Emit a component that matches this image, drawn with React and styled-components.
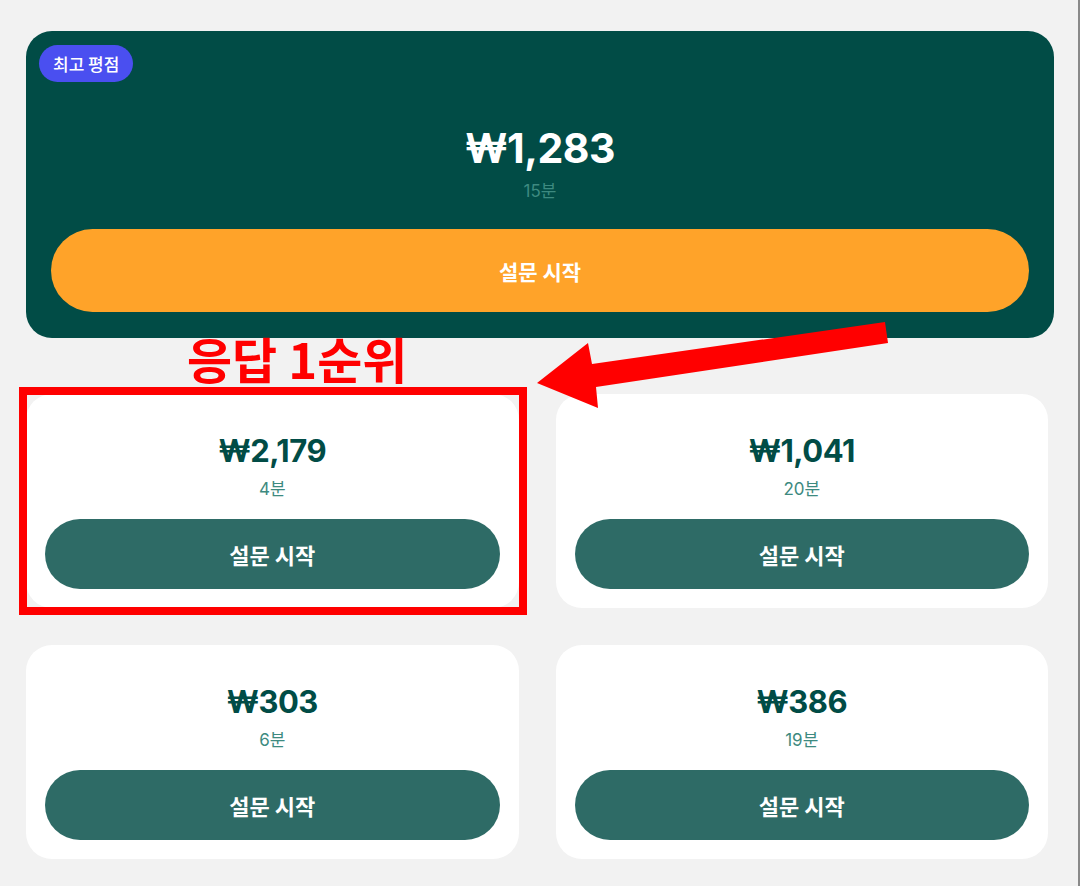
import React from 'react';
import styled, { createGlobalStyle } from 'styled-components';

const surveys = [
  { id: 1, price: '₩2,179', time: '4분' },
  { id: 2, price: '₩1,041', time: '20분' },
  { id: 3, price: '₩303', time: '6분' },
  { id: 4, price: '₩386', time: '19분' },
];

export default function App() {
  return (
    <>
      <GlobalStyle />
      <Page>
        <FeaturedCard>
          <Badge>최고 평점</Badge>
          <FeaturedPrice>₩1,283</FeaturedPrice>
          <FeaturedTime>15분</FeaturedTime>
          <FeaturedButton>설문 시작</FeaturedButton>
        </FeaturedCard>

        <Grid>
          {surveys.map((s) => (
            <Card key={s.id}>
              <Price>{s.price}</Price>
              <Time>{s.time}</Time>
              <StartButton>설문 시작</StartButton>
            </Card>
          ))}
        </Grid>

        <Callout>응답 1순위</Callout>
        <HighlightBox />
        <Arrow viewBox="0 0 1080 886">
          <polygon points="885,322 888,343 596,387 598,408 537,383 588,343 592,364" fill="#ff0000" />
        </Arrow>
      </Page>
    </>
  );
}

const GlobalStyle = createGlobalStyle`
  html, body {
    margin: 0;
    padding: 0;
    background: #f2f2f2;
  }
  body {
    font-family: Inter, "Noto Sans CJK KR", sans-serif;
  }
`;

const Page = styled.main`
  position: relative;
  width: 1080px;
  height: 886px;
  box-sizing: border-box;
  padding: 31px 26px 0;
  background: #f2f2f2;
  border-right: 2px solid #8a8a8a;
  overflow: hidden;
`;

const FeaturedCard = styled.section`
  position: relative;
  width: 1028px;
  box-sizing: border-box;
  padding: 91px 25px 26px;
  border-radius: 26px;
  background: #014c46;
  display: flex;
  flex-direction: column;
  align-items: center;
`;

const Badge = styled.span`
  position: absolute;
  top: 14px;
  left: 13px;
  height: 37px;
  padding: 0 14px;
  border-radius: 19px;
  background: #4a4ff0;
  color: #ffffff;
  font-family: "Noto Sans CJK KR", sans-serif;
  font-size: 17px;
  font-weight: 500;
  line-height: 37px;
`;

const FeaturedPrice = styled.div`
  font-family: Inter, "Noto Sans CJK KR", sans-serif;
  font-size: 41px;
  font-weight: 700;
  letter-spacing: -0.5px;
  line-height: 52px;
  color: #ffffff;
`;

const FeaturedTime = styled.div`
  margin-top: 6px;
  font-family: Inter, "Noto Sans CJK KR", sans-serif;
  font-size: 17px;
  line-height: 22px;
  color: #3d8a80;
`;

const FeaturedButton = styled.button`
  margin-top: 27px;
  width: 100%;
  height: 83px;
  border: none;
  border-radius: 42px;
  background: #ffa329;
  color: #ffffff;
  font-family: "Noto Sans CJK KR", sans-serif;
  font-size: 21px;
  font-weight: 600;
  cursor: pointer;
`;

const Grid = styled.div`
  margin-top: 56px;
  width: 1022px;
  display: grid;
  grid-template-columns: 1fr 1fr;
  column-gap: 37px;
  row-gap: 37px;
`;

const Card = styled.article`
  box-sizing: border-box;
  padding: 36px 19px 19px;
  border-radius: 26px;
  background: #ffffff;
  display: flex;
  flex-direction: column;
  align-items: center;
`;

const Price = styled.div`
  font-family: Inter, "Noto Sans CJK KR", sans-serif;
  font-size: 31px;
  font-weight: 700;
  letter-spacing: -0.5px;
  line-height: 42px;
  color: #014c46;
`;

const Time = styled.div`
  margin-top: 6px;
  font-family: Inter, "Noto Sans CJK KR", sans-serif;
  font-size: 17px;
  line-height: 22px;
  color: #3d8a80;
`;

const StartButton = styled.button`
  margin-top: 19px;
  width: 100%;
  height: 70px;
  border: none;
  border-radius: 35px;
  background: #2e6b66;
  color: #ffffff;
  font-family: "Noto Sans CJK KR", sans-serif;
  font-size: 22px;
  font-weight: 600;
  cursor: pointer;
`;

const Callout = styled.div`
  position: absolute;
  left: 187px;
  top: 333px;
  font-family: "Noto Sans CJK KR", sans-serif;
  font-size: 49px;
  font-weight: 700;
  line-height: 49px;
  color: #ff0000;
  white-space: nowrap;
`;

const HighlightBox = styled.div`
  position: absolute;
  left: 19px;
  top: 387px;
  width: 508px;
  height: 228px;
  box-sizing: border-box;
  border: 8px solid #ff0000;
  pointer-events: none;
`;

const Arrow = styled.svg`
  position: absolute;
  left: 0;
  top: 0;
  width: 1080px;
  height: 886px;
  pointer-events: none;
`;
